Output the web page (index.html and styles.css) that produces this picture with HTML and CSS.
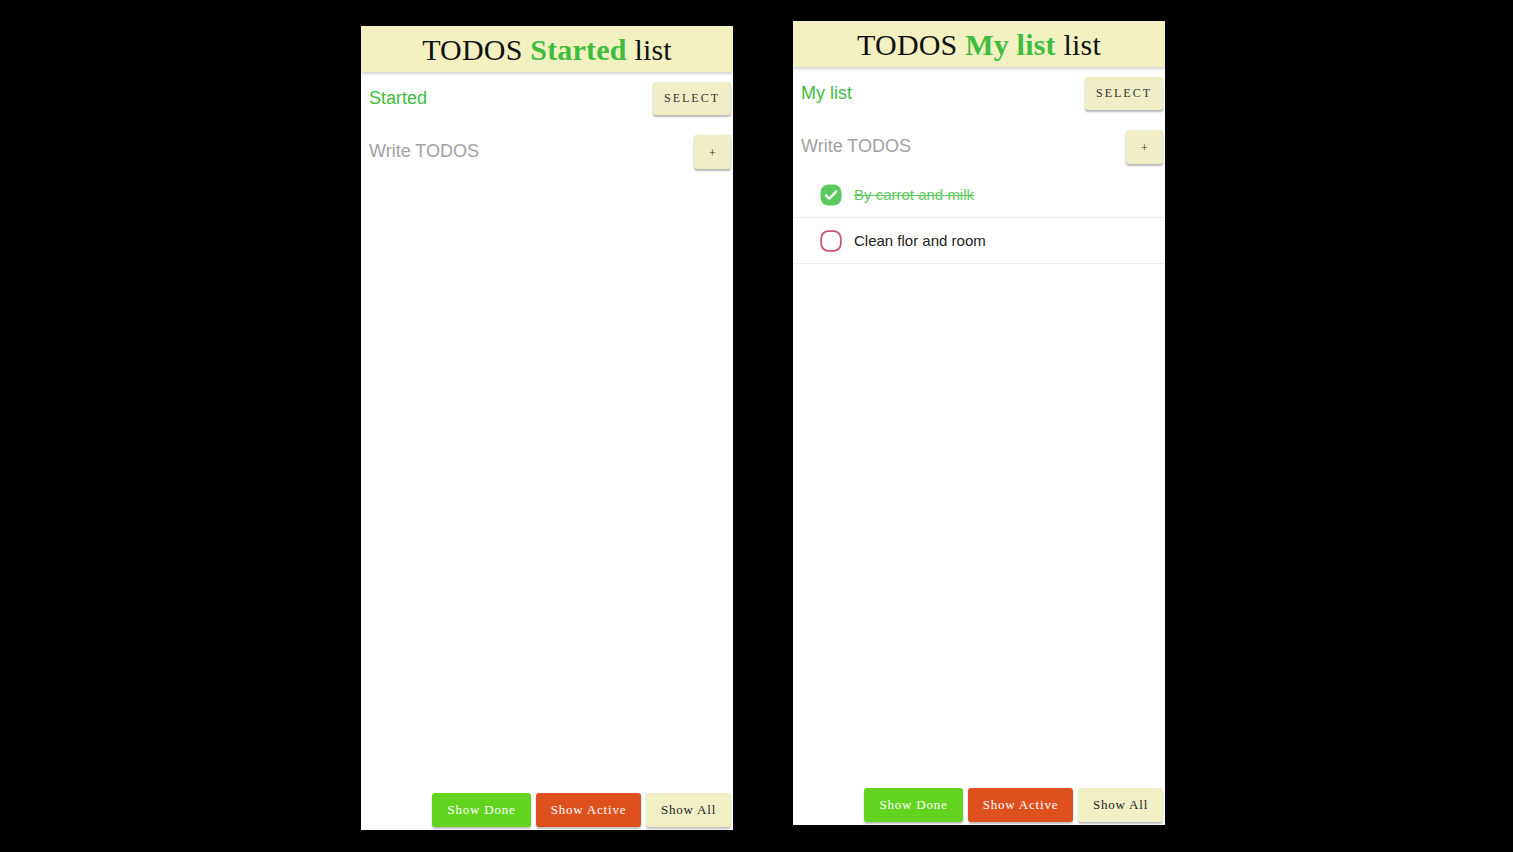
FILE: index.html
```html
<!DOCTYPE html>
<html>
<head>
<meta charset="utf-8">
<link rel="stylesheet" href="styles.css">
</head>
<body>
<div class="stage">
  <section class="phone phone-low">
    <header class="title-bar"><h1>TODOS <b>Started</b> list</h1></header>
    <div class="row">
      <span class="list-name">Started</span>
      <button class="btn-cream btn-select">Select</button>
    </div>
    <div class="row row-input">
      <span class="placeholder">Write TODOS</span>
      <button class="btn-cream btn-plus">+</button>
    </div>
    <ul class="todos"></ul>
    <footer class="filters">
      <button class="filter filter-done">Show Done</button>
      <button class="filter filter-active">Show Active</button>
      <button class="filter filter-all">Show All</button>
    </footer>
  </section>
  <section class="phone phone-high">
    <header class="title-bar"><h1>TODOS <b>My list</b> list</h1></header>
    <div class="row">
      <span class="list-name">My list</span>
      <button class="btn-cream btn-select">Select</button>
    </div>
    <div class="row row-input">
      <span class="placeholder">Write TODOS</span>
      <button class="btn-cream btn-plus">+</button>
    </div>
    <ul class="todos">
      <li class="todo done">
        <svg class="check" width="22" height="22" viewBox="0 0 22 22"><rect x="0.5" y="0.5" width="21" height="21" rx="8" fill="#5cc95c"/><path d="M6 11.3l3.3 3.3L16.2 7.6" fill="none" stroke="#fff" stroke-width="2.4" stroke-linecap="round" stroke-linejoin="round"/></svg>
        <span class="todo-text">By carrot and milk</span>
      </li>
      <li class="todo">
        <svg class="check" width="22" height="22" viewBox="0 0 22 22"><rect x="1.2" y="1.2" width="19.6" height="19.6" rx="7" fill="#fff" stroke="#c9577a" stroke-width="1.8"/></svg>
        <span class="todo-text">Clean flor and room</span>
      </li>
    </ul>
    <footer class="filters">
      <button class="filter filter-done">Show Done</button>
      <button class="filter filter-active">Show Active</button>
      <button class="filter filter-all">Show All</button>
    </footer>
  </section>
</div>
</body>
</html>
```
FILE: styles.css
```css
* { box-sizing: border-box; }
html, body { margin: 0; padding: 0; }
body {
  background: #000;
  width: 1513px;
  height: 852px;
  overflow: hidden;
  font-family: "Liberation Sans", Arial, sans-serif;
}
.stage {
  display: flex;
  align-items: flex-start;
  gap: 60px;
  padding-left: 361px;
}
.phone {
  width: 372px;
  height: 804px;
  background: #fff;
  display: flex;
  flex-direction: column;
}
.phone-low { margin-top: 26px; }
.phone-high { margin-top: 21px; }

.title-bar {
  height: 46px;
  background: #f3f1c1;
  box-shadow: 0 2px 3px rgba(0,0,0,0.18);
  display: flex;
  align-items: center;
  justify-content: center;
  position: relative;
  z-index: 1;
}
.title-bar h1 {
  margin: 2px 0 0;
  font-family: "Liberation Serif", "DejaVu Serif", serif;
  font-weight: normal;
  font-size: 30px;
  color: #111;
  letter-spacing: 0.2px;
}
.title-bar h1 b {
  color: #3fbd3f;
  font-weight: bold;
}

.row {
  display: flex;
  align-items: center;
  justify-content: space-between;
  padding: 0 2px 0 8px;
  height: 53px;
}
.list-name {
  color: #3fbd3f;
  font-size: 18px;
}
.placeholder {
  color: #a2a2a2;
  font-size: 18px;
}

.btn-cream {
  background: #f0eec6;
  border: none;
  border-radius: 3px;
  box-shadow: 0 2px 2px rgba(0,0,0,0.28), 0 0 1px rgba(0,0,0,0.15);
  font-family: "Liberation Serif", "DejaVu Serif", serif;
  font-weight: normal;
  color: #333;
  padding: 0;
}
.btn-select {
  width: 78px;
  height: 33px;
  text-transform: uppercase;
  font-size: 12px;
  letter-spacing: 2px;
}
.btn-plus {
  width: 37px;
  height: 34px;
  font-size: 12px;
  padding-top: 3px;
}

.todos {
  list-style: none;
  margin: -1px 0 0;
  padding: 0;
  flex: 1;
}
.todo {
  display: flex;
  align-items: center;
  height: 46px;
  padding-left: 27px;
  border-bottom: 1px solid #eeeeee;
}
.check { flex: none; margin-right: 12px; }
.todo-text {
  font-size: 15px;
  color: #222;
}
.todo.done .todo-text {
  color: #5cc95c;
  text-decoration: line-through;
}

.filters {
  display: flex;
  justify-content: flex-end;
  gap: 5px;
  padding: 0 2px 3px 0;
}
.filter {
  height: 34px;
  border: none;
  border-radius: 3px;
  font-family: "Liberation Serif", "DejaVu Serif", serif;
  font-weight: normal;
  font-size: 13px;
  letter-spacing: 0.8px;
  padding: 0;
  box-shadow: 0 2px 2px rgba(0,0,0,0.25);
}
.filter-done { width: 99px; background: #62d41f; color: #fff; }
.filter-active { width: 105px; background: #df501f; color: #fff; }
.filter-all { width: 85px; background: #f1efc6; color: #222; }
```
